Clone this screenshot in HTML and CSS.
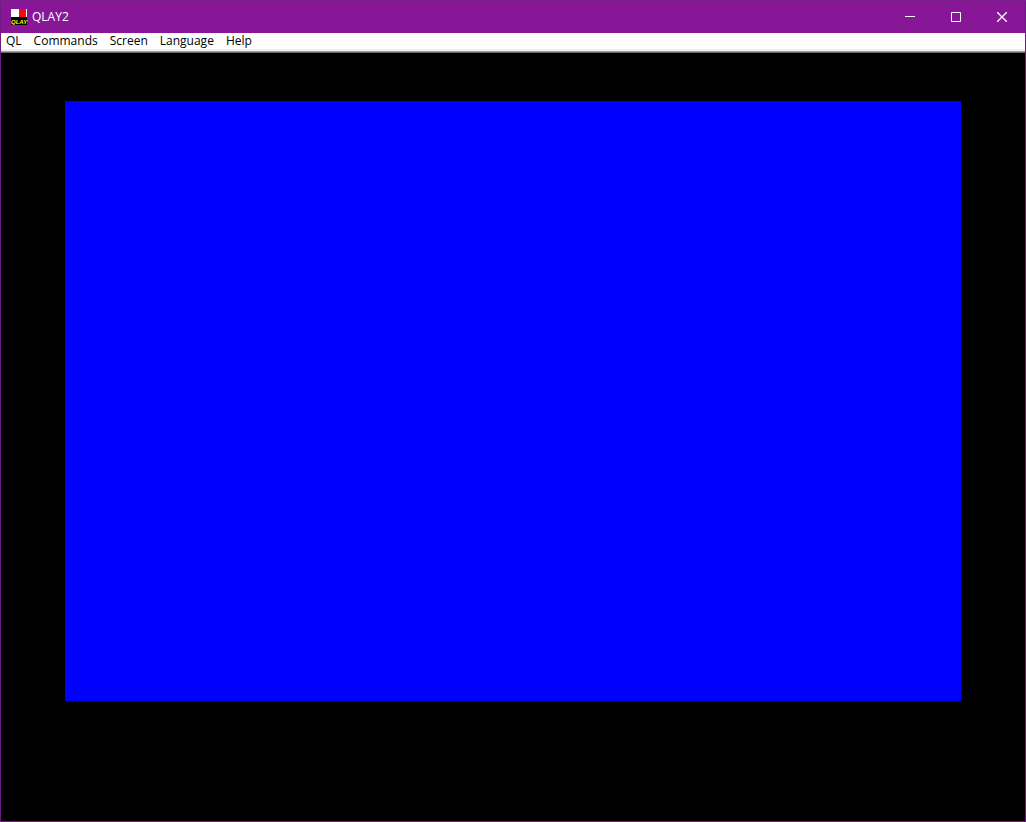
FILE: index.html
```html
<!DOCTYPE html>
<html lang="en">
<head>
<meta charset="utf-8">
<title>QLAY2</title>
<link rel="stylesheet" href="styles.css">
</head>
<body>
<div class="window">
  <header class="titlebar">
    <svg class="logo" width="18" height="18" viewBox="0 0 18 18" aria-hidden="true" shape-rendering="crispEdges">
      <path d="M1 9h16v8H1z" fill="#000"/>
      <path d="M1 1h8v8H1z" fill="#fff"/>
      <path d="M9 1h7v8H9z" fill="#f00c14"/>
      <path d="M16 1h1v8h-1z" fill="#fff"/>
      <text class="logo-text" x="1" y="16">QLAY</text>
    </svg>
    <h1 class="title">QLAY2</h1>
    <div class="controls">
      <button class="control" type="button" aria-label="Minimize">
        <svg width="10" height="10" viewBox="0 0 10 10"><path d="M0 4.5h10"/></svg>
      </button>
      <button class="control" type="button" aria-label="Maximize">
        <svg width="10" height="10" viewBox="0 0 10 10"><path d="M.5.5h9v9h-9z"/></svg>
      </button>
      <button class="control" type="button" aria-label="Close">
        <svg class="cross" width="10" height="10" viewBox="0 0 10 10"><path d="M0 0l10 10M10 0L0 10"/></svg>
      </button>
    </div>
  </header>
  <nav class="menubar">
    <button class="menu" type="button">QL</button>
    <button class="menu" type="button">Commands</button>
    <button class="menu" type="button">Screen</button>
    <button class="menu" type="button">Language</button>
    <button class="menu" type="button">Help</button>
  </nav>
  <main class="client">
    <div class="screen"></div>
  </main>
</div>
</body>
</html>
```
FILE: styles.css
```css
* { box-sizing: border-box; }

body {
  margin: 0;
  font: 12px/16px "Open Sans", "Noto Sans", sans-serif;
}

.window {
  display: flex;
  flex-direction: column;
  min-height: 100vh;
  border: 1px solid #6e1a80;
  border-top-color: #80208e;
  background: #000;
}

.titlebar {
  display: flex;
  align-items: center;
  height: 32px;
  padding-left: 9px;
  background: #881798;
  color: #fff;
}

.logo {
  display: block;
}

.logo-text {
  font: italic bold 6px "Liberation Sans", sans-serif;
  fill: #ff0;
}

.title {
  margin: 0 0 0 4px;
  font-size: 12px;
  font-weight: 400;
}

.controls {
  display: flex;
  align-self: stretch;
  margin-left: auto;
}

.control {
  display: flex;
  align-items: center;
  justify-content: center;
  width: 46px;
  padding: 0;
  border: 0;
  background: none;
}

.control svg {
  fill: none;
  stroke: #fff;
}

.control .cross {
  stroke-width: 1.3;
}

.menubar {
  display: flex;
  align-items: flex-start;
  gap: 12px;
  height: 20px;
  padding-left: 5px;
  border-bottom: 1px solid #696969;
  background: #fff;
  box-shadow: inset 0 -1px #a0a0a0, inset 0 -3px #f0f0f0;
}

.menu {
  padding: 0;
  border: 0;
  background: none;
  color: #000;
  font: inherit;
}

.client {
  display: flex;
  flex: 1;
  padding: 48px 64px 120px;
  background: #000;
}

.screen {
  flex: 1;
  background: #00f;
}
```
